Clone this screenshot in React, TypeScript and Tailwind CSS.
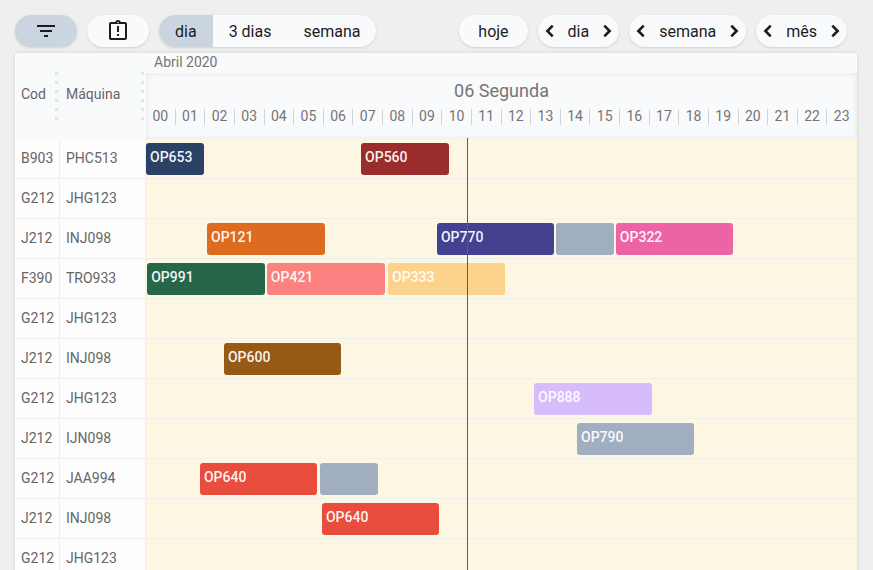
import { useState } from 'react';
import { MdFilterList, MdOutlineAssignmentLate } from 'react-icons/md';

type Task = { label?: string; start: number; hours: number; color: string };
type Machine = { code: string; name: string; tasks: Task[] };

const HOURS = 24;
const NOW = 10.84;

const machines: Machine[] = [
  {
    code: 'B903',
    name: 'PHC513',
    tasks: [
      { label: 'OP653', start: 0, hours: 1.96, color: 'bg-[#2a4365]' },
      { label: 'OP560', start: 7.26, hours: 2.97, color: 'bg-[#9b2c2c]' },
    ],
  },
  { code: 'G212', name: 'JHG123', tasks: [] },
  {
    code: 'J212',
    name: 'INJ098',
    tasks: [
      { label: 'OP121', start: 2.06, hours: 3.97, color: 'bg-[#dd6b20]' },
      { label: 'OP770', start: 9.82, hours: 3.95, color: 'bg-[#434190]' },
      { start: 13.84, hours: 1.96, color: 'bg-[#a0aec0]' },
      { label: 'OP322', start: 15.86, hours: 3.95, color: 'bg-[#ed64a6]' },
    ],
  },
  {
    code: 'F390',
    name: 'TRO933',
    tasks: [
      { label: 'OP991', start: 0.04, hours: 3.97, color: 'bg-[#276749]' },
      { label: 'OP421', start: 4.08, hours: 4, color: 'bg-[#fc8181]' },
      { label: 'OP333', start: 8.17, hours: 3.95, color: 'bg-[#fbd38d]' },
    ],
  },
  { code: 'G212', name: 'JHG123', tasks: [] },
  {
    code: 'J212',
    name: 'INJ098',
    tasks: [{ label: 'OP600', start: 2.63, hours: 3.95, color: 'bg-[#975a16]' }],
  },
  {
    code: 'G212',
    name: 'JHG123',
    tasks: [{ label: 'OP888', start: 13.1, hours: 3.97, color: 'bg-[#d6bcfa]' }],
  },
  {
    code: 'J212',
    name: 'IJN098',
    tasks: [{ label: 'OP790', start: 14.55, hours: 3.95, color: 'bg-[#a0aec0]' }],
  },
  {
    code: 'G212',
    name: 'JAA994',
    tasks: [
      { label: 'OP640', start: 1.82, hours: 3.95, color: 'bg-[#e84d3d]' },
      { start: 5.87, hours: 1.96, color: 'bg-[#a0aec0]' },
    ],
  },
  {
    code: 'J212',
    name: 'INJ098',
    tasks: [{ label: 'OP640', start: 5.94, hours: 3.95, color: 'bg-[#e84d3d]' }],
  },
  { code: 'G212', name: 'JHG123', tasks: [] },
];

const percent = (hours: number) => `${(hours / HOURS) * 100}%`;

function Chevron({ points }: { points: string }) {
  return (
    <svg viewBox="0 0 24 24" className="block size-6" fill="none" stroke="currentColor" strokeWidth="2.6">
      <polyline points={points} />
    </svg>
  );
}

function Stepper({ label }: { label: string }) {
  return (
    <div className="flex h-8 items-center gap-1.5 rounded-full bg-[#f9fafc] shadow-sm">
      <button type="button" aria-label={`${label} anterior`}>
        <Chevron points="14.7,6.7 9.4,12 14.7,17.3" />
      </button>
      <span className="pt-0.5">{label}</span>
      <button type="button" aria-label={`${label} seguinte`}>
        <Chevron points="9.3,6.7 14.6,12 9.3,17.3" />
      </button>
    </div>
  );
}

function Toolbar() {
  const views = ['dia', '3 dias', 'semana'];
  const [view, setView] = useState('dia');
  return (
    <div className="flex items-center justify-between pr-2.5 text-base text-[#1c1c1c]">
      <div className="flex gap-2.5">
        <button
          type="button"
          aria-label="Filtrar"
          className="flex h-8 items-center rounded-full bg-[#cbd5e0] px-[19px] shadow-sm"
        >
          <MdFilterList size={24} />
        </button>
        <button
          type="button"
          aria-label="Pendências"
          className="flex h-8 items-center rounded-full bg-[#f9fafc] px-[19px] shadow-sm"
        >
          <MdOutlineAssignmentLate size={24} />
        </button>
        <div className="flex h-8 overflow-hidden rounded-full bg-[#f9fafc] shadow-sm">
          {views.map((name) => (
            <button
              key={name}
              type="button"
              aria-pressed={view === name}
              onClick={() => setView(name)}
              className={view === name ? 'bg-[#cbd5e0] px-4 pt-0.5' : 'px-4 pt-0.5'}
            >
              {name}
            </button>
          ))}
        </div>
      </div>
      <div className="flex gap-2.5">
        <button type="button" className="h-8 rounded-full bg-[#f9fafc] px-[19px] pt-0.5 shadow-sm">
          hoje
        </button>
        <Stepper label="dia" />
        <Stepper label="semana" />
        <Stepper label="mês" />
      </div>
    </div>
  );
}

function ColumnHeader({ title }: { title: string }) {
  return (
    <th scope="col" className="p-0 font-normal">
      <div className="flex h-[86px] items-center justify-between pr-0.5 pl-1.5">
        <span className="pb-1">{title}</span>
        <span className="flex flex-col gap-1.5" aria-hidden="true">
          {[0, 1, 2, 3, 4, 5].map((dot) => (
            <span key={dot} className="size-[3px] bg-[#d9e8e8]" />
          ))}
        </span>
      </div>
    </th>
  );
}

function TimelineHeader() {
  return (
    <th scope="col" className="p-0 font-normal text-[#757575]">
      <div className="h-5 px-2 text-left leading-[18px]">Abril 2020</div>
      <div className="flex h-[66px] flex-col pt-1.5 shadow-[inset_0_0_6px_rgba(0,0,0,0.09)]">
        <div className="text-center text-lg leading-6">06 Segunda</div>
        <div className="mt-1.5 grid grid-cols-24">
          {Array.from({ length: HOURS }, (_, hour) => (
            <div
              key={hour}
              className="h-4 border-r border-[#d2d5d8] text-center leading-[14px] last:border-transparent"
            >
              {String(hour).padStart(2, '0')}
            </div>
          ))}
        </div>
      </div>
    </th>
  );
}

export default function App() {
  return (
    <div className="h-screen overflow-hidden bg-[#efefef] px-4 pt-[15px] pl-[15px] font-['Roboto',sans-serif]">
      <Toolbar />
      <div className="relative mt-1.5 bg-[#f9fafc] text-sm text-[#666666] shadow-[0_0_4px_rgba(0,0,0,0.12)]">
        <table className="w-full table-fixed border-collapse">
          <colgroup>
            <col className="w-[45px]" />
            <col className="w-[86px]" />
            <col />
          </colgroup>
          <thead>
            <tr>
              <ColumnHeader title="Cod" />
              <ColumnHeader title="Máquina" />
              <TimelineHeader />
            </tr>
          </thead>
          <tbody>
            {machines.map((machine, index) => (
              <tr key={index}>
                <td className="bg-[#fdfdfd] p-0">
                  <div className="h-10 border-r border-b border-[#ebf1f1] pl-1.5 leading-[39px]">
                    {machine.code}
                  </div>
                </td>
                <td className="bg-[#fdfdfd] p-0">
                  <div className="h-10 border-r border-b border-[#ebf1f1] pl-1.5 leading-[39px]">
                    {machine.name}
                  </div>
                </td>
                <td className="bg-[#fdf6e3] p-0">
                  <div className="relative h-10 border-b border-[#ebf1ed]">
                    {machine.tasks.map((task) => (
                      <div
                        key={task.start}
                        className={`absolute top-1 h-8 rounded-[3px] px-1 leading-7 font-medium text-white/95 ${task.color}`}
                        style={{ left: percent(task.start), width: percent(task.hours) }}
                      >
                        {task.label}
                      </div>
                    ))}
                  </div>
                </td>
              </tr>
            ))}
          </tbody>
        </table>
        <div className="pointer-events-none absolute top-[85px] right-0 bottom-0 left-[131px]">
          <div className="absolute inset-y-0 w-px bg-[#c53030]" style={{ left: percent(NOW) }} />
        </div>
      </div>
    </div>
  );
}
